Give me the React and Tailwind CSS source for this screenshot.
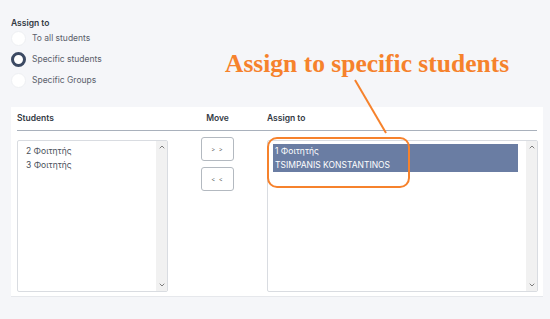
import React from 'react';
import { ChevronUp, ChevronDown } from 'lucide-react';

const options = [
  { id: 'all', label: 'To all students' },
  { id: 'specific', label: 'Specific students' },
  { id: 'groups', label: 'Specific Groups' },
];

const Radio = ({ checked, label }) => (
  <label className="flex items-center h-[21px] gap-[6px]">
    <span
      className={`w-[15px] h-[15px] rounded-full bg-white ${
        checked ? 'border-[3px] border-[#3c4a63]' : 'border border-[#eef0f3]'
      }`}
    />
    <span className="text-[8.5px] text-[#5a606b]">{label}</span>
  </label>
);

const ListBox = ({ children, className = '' }) => (
  <div className={`flex h-[152px] border border-[#d9dce1] rounded-[2px] bg-white ${className}`}>
    <div className="flex-1 min-w-0">{children}</div>
    <div className="w-[11px] bg-[#f1f1f1] flex flex-col justify-between items-center py-[2px] text-[#666]">
      <ChevronUp size={8} strokeWidth={2.5} />
      <ChevronDown size={8} strokeWidth={2.5} />
    </div>
  </div>
);

export default function App() {
  return (
    <div
      className="relative w-[550px] h-[319px] bg-[#f5f6f9] overflow-hidden"
      style={{ fontFamily: 'Inter, "Noto Sans", sans-serif' }}
    >
      {/* assign to radios */}
      <div className="pl-[11px] pt-[18px]">
        <div className="text-[8.5px] font-semibold text-[#333a44] leading-[10px]">Assign to</div>
        <div className="flex flex-col">
          {options.map(o => (
            <Radio key={o.id} checked={o.id === 'specific'} label={o.label} />
          ))}
        </div>
      </div>

      {/* card */}
      <div className="ml-[11px] mt-[16px] w-[532px] bg-white border-b border-[#e6e8ec] px-[6px] pb-[4px]">
        <div className="grid grid-cols-[151px_99px_271px] h-[24px] items-center border-b border-[#a9b1bc] text-[8.5px] font-semibold text-[#333a44]">
          <div>Students</div>
          <div className="text-center">Move</div>
          <div>Assign to</div>
        </div>

        <div className="grid grid-cols-[151px_99px_271px]">
          <ListBox className="mt-[9px]">
            <div className="pt-[3px] pl-[8px] text-[8.5px] text-[#4a505a] leading-[14px]">
              <div>2 Φοιτητής</div>
              <div>3 Φοιτητής</div>
            </div>
          </ListBox>

          <div className="flex flex-col items-center gap-[6px] pt-[6px]">
            <button className="w-[33px] h-[24px] border border-[#b3b9c0] rounded-[3px] bg-white text-[6px] text-[#666] tracking-[1px]">
              &gt; &gt;
            </button>
            <button className="w-[33px] h-[24px] border border-[#b3b9c0] rounded-[3px] bg-white text-[6px] text-[#666] tracking-[1px]">
              &lt; &lt;
            </button>
          </div>

          <ListBox className="mt-[9px]">
            <div className="pt-[3px] pl-[5px] pr-[8px]">
              <div className="bg-[#6a7da3] text-white text-[8.5px] leading-[14px] pl-[2px]">
                <div>1 Φοιτητής</div>
                <div>TSIMPANIS KONSTANTINOS</div>
              </div>
            </div>
          </ListBox>
        </div>
      </div>

      {/* annotation */}
      <div
        className="absolute left-[225px] top-[51px] text-[25.5px] leading-[25.5px] font-bold text-[#f6822c] whitespace-nowrap"
        style={{ fontFamily: '"Liberation Serif", "Times New Roman", serif' }}
      >
        Assign to specific students
      </div>
      <svg className="absolute left-0 top-0 pointer-events-none" width="550" height="319">
        <line x1="355" y1="80" x2="386" y2="133" stroke="#f6822c" strokeWidth="2" />
      </svg>
      <div className="absolute left-[267px] top-[137px] w-[143px] h-[51px] border-[2.5px] border-[#f6822c] rounded-[10px]" />
    </div>
  );
}
